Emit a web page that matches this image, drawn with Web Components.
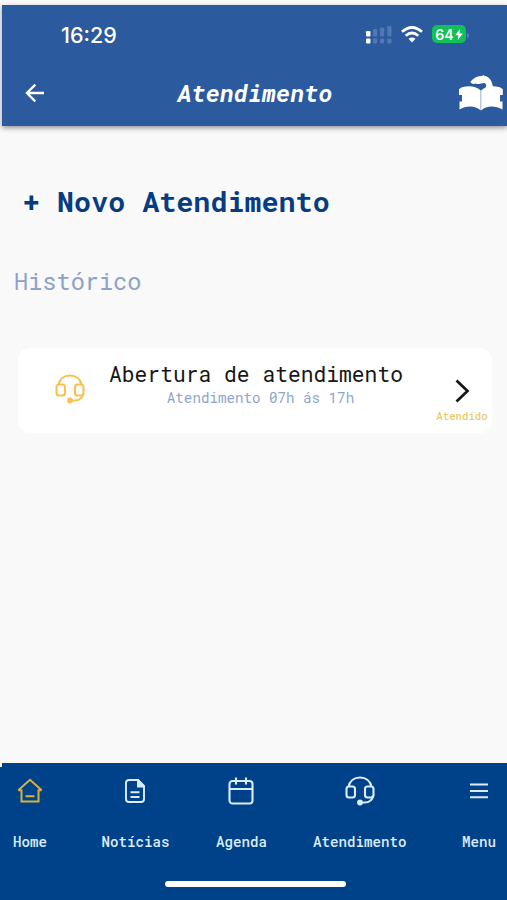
<!DOCTYPE html>
<html lang="pt-BR">
<head>
<meta charset="utf-8">
<meta name="viewport" content="width=device-width, initial-scale=1">
<title>Atendimento</title>
<style>
    body {
        margin: 0;
        background: #f9f9f9;
        font-family: "Roboto Mono", "DejaVu Sans Mono", "Liberation Mono", monospace;
    }
</style>
</head>
<body>
<mobile-app></mobile-app>

<script>
const ICONS = {
    back: /* html */`<svg width="20" height="20" viewBox="0 0 20 20" fill="none" stroke="currentColor" stroke-width="2.3"><path d="M19 10H2.500M10.300 1.600 1.900 10l8.400 8.400"/></svg>`,
    logo: /* html */`<svg width="44" height="36" viewBox="0 0 44 36" fill="currentColor"><path d="M0 14C1 14 1.500 12.500 4 12 10 10.500 17 11 21.700 15.500V35.500C16.500 30.500 7 30.500 .5 34.500V26.500h2.500v-6.500H0zM43.800 14C42.800 14 42.300 12.500 39.800 12 33.800 10.500 27 11 22.100 15.500V35.500C27 30.500 36.500 30.500 43.500 34.500V26.500h-2.500v-6.500h2.800z"/><path d="M11.500 6.500C14 4.500 15 2.500 19 1.500L23.500.8 24.500 0l1.200 1C30 1.500 33 5 34 12.500L26 13.500C28 11 27.500 9 25.500 8 22 8 19 10 16.500 8.500 14.500 9.500 11.500 8.500 11.500 6.500z"/><path d="M21.900 15.500V34" stroke="#b3c5df" stroke-width=".6"/></svg>`,
    headset: /* html */`<svg width="30" height="30" viewBox="0 0 30 30" fill="none" stroke="currentColor" stroke-width="2.100"><path d="M3.500 11C4.500 5 9 1.500 15 1.500S25.500 5 26.500 11M28 19.500C27.500 24 24 26.500 19.500 26.500H16"/><rect x="1.500" y="10.500" width="8.500" height="11" rx="2.500"/><rect x="20" y="10.500" width="8.500" height="11" rx="2.500"/><circle cx="15" cy="26.500" r="2.900" fill="currentColor" stroke="none"/></svg>`,
    next: /* html */`<svg width="16" height="26" viewBox="0 0 16 26" fill="none" stroke="currentColor" stroke-width="2.700"><path d="M2.500 2.500 13.500 13 2.500 23.500"/></svg>`,
    home: /* html */`<svg width="26" height="26" viewBox="0 0 26 26" fill="none" stroke="currentColor" stroke-width="2"><path d="M4.500 11.500v12h17v-12M1.300 12.300H4.500M21.500 12.300h3.200M1.300 12.300 13 1.800 24.700 12.300M8.500 18.300h9"/></svg>`,
    news: /* html */`<svg width="20" height="24" viewBox="0 0 20 24" fill="none" stroke="currentColor" stroke-width="1.900"><path d="M13 1H4Q1 1 1 4V20Q1 23 4 23H16Q19 23 19 20V7zM5.500 13.300h9M5.500 18h9"/><path d="M13 1V7.500H19z" fill="currentColor"/></svg>`,
    calendar: /* html */`<svg width="26" height="28" viewBox="0 0 26 28" fill="none" stroke="currentColor" stroke-width="2.100"><rect x="1.500" y="4" width="23" height="22.500" rx="3"/><path d="M1.500 12h23M8 .5v7M18 .5v7"/></svg>`,
    menu: /* html */`<svg width="18" height="16" viewBox="0 0 18 16" fill="none" stroke="currentColor" stroke-width="1.900"><path d="M0 1.500h18M0 8h18M0 14.300h18"/></svg>`,
    signal: /* html */`<svg width="26" height="18" viewBox="0 0 26 18"><g fill="#5178b3"><rect x="7" y="3" width="4.200" height="7.500" rx="1"/><rect x="14" y="1.500" width="4.200" height="9" rx="1"/><rect x="21.300" y="0" width="4.200" height="10.500" rx="1"/><rect x="7" y="12.500" width="4.200" height="5" rx="1"/><rect x="14" y="12.500" width="4.200" height="5" rx="1"/><rect x="21.300" y="12.500" width="4.200" height="5" rx="1"/></g><g fill="#fff"><rect y="5" width="4.500" height="5.500" rx="1"/><rect y="12.500" width="4.500" height="5" rx="1"/></g></svg>`,
    wifi: /* html */`<svg width="22" height="17" viewBox="0 0 22 17" fill="none" stroke="#fff" stroke-width="2.800"><path d="M1 5.800Q11-2.800 21 5.800M4.700 9.700Q11 4.300 17.300 9.700"/><path d="M11 16.500 7.500 12.800Q11 10 14.500 12.800z" fill="#fff" stroke="none"/></svg>`,
    bolt: /* html */`<svg width="8" height="11" viewBox="0 0 8 11" fill="#fff"><path d="M5 0 .3 6.200H3.300L2.800 11 7.800 4.600H4.600z"/></svg>`
};

class AppIcon extends HTMLElement {
    constructor() {
        super();
        this.attachShadow({mode: "open"});
    }

    connectedCallback() {
        this.shadowRoot.innerHTML = /* html */`
        <style>
            :host { display: block; flex: none; }
            svg { display: block; }
        </style>
        ${ICONS[this.getAttribute("name")]}
        `;
    }
}

class StatusBar extends HTMLElement {
    constructor() {
        super();
        this.attachShadow({mode: "open"});
    }

    static get styles() {
        return /* css */`
            :host {
                display: flex;
                align-items: center;
                height: 60px;
                padding: 0 38px 0 59px;
                font-family: Inter, Roboto, sans-serif;
            }

            .time {
                flex: 1;
                margin-top: -1px;
                font-size: 21.5px;
                font-weight: 500;
            }

            .wifi {
                margin: -2px 9px 0;
            }

            .battery {
                display: flex;
                align-items: center;
                justify-content: center;
                gap: 1px;
                width: 34px;
                height: 18px;
                margin-top: -2px;
                border-radius: 5px;
                background: #12c058;
                font-size: 14px;
                font-weight: 600;
            }

            .cap {
                width: 2px;
                height: 5px;
                margin-left: 1px;
                border-radius: 0 2px 2px 0;
                background: #3c8fa0;
            }
        `;
    }

    connectedCallback() {
        this.shadowRoot.innerHTML = /* html */`
        <style>${StatusBar.styles}</style>
        <span class="time">16:29</span>
        <app-icon name="signal"></app-icon>
        <app-icon class="wifi" name="wifi"></app-icon>
        <div class="battery"><span>64</span><app-icon name="bolt"></app-icon></div>
        <div class="cap"></div>
        `;
    }
}

class AppHeader extends HTMLElement {
    constructor() {
        super();
        this.attachShadow({mode: "open"});
    }

    static get styles() {
        return /* css */`
            :host {
                display: block;
                height: 121px;
                color: #fff;
                background: #2c5a9e;
                box-shadow: 0 2px 5px #0006;
            }

            .bar {
                display: grid;
                grid-template-columns: 1fr auto 1fr;
                align-items: center;
                height: 56px;
                padding: 0 4px 0 23px;
            }

            .logo {
                justify-self: end;
            }

            h1 {
                margin: 0;
                font-size: 24px;
                font-style: italic;
                font-weight: 700;
                transform: translateX(-9px);
            }
        `;
    }

    connectedCallback() {
        this.shadowRoot.innerHTML = /* html */`
        <style>${AppHeader.styles}</style>
        <status-bar></status-bar>
        <div class="bar">
            <app-icon name="back"></app-icon>
            <h1><slot></slot></h1>
            <app-icon class="logo" name="logo"></app-icon>
        </div>
        `;
    }
}

class SupportCard extends HTMLElement {
    constructor() {
        super();
        this.attachShadow({mode: "open"});
    }

    static get styles() {
        return /* css */`
            :host {
                display: grid;
                grid-template-columns: 73px 1fr 56px;
                height: 85px;
                margin: 0 15px 0 16px;
                padding: 0 2px 0 17px;
                box-sizing: border-box;
                border-radius: 12px;
                background: #fff;
                white-space: nowrap;
            }

            .icon {
                align-self: center;
                justify-self: center;
                margin: -4px 3px 0 0;
                color: #f8c150;
            }

            .text {
                display: flex;
                flex-direction: column;
                align-items: center;
                padding: 12px 30px 0 0;
                line-height: 28px;
                font-size: 21.3px;
                color: #161616;
            }

            .hours {
                padding-left: 9px;
                line-height: 19px;
                font-size: 14.2px;
                color: #8ea5cb;
            }

            .state {
                display: flex;
                flex-direction: column;
                align-items: center;
                padding-top: 30px;
                color: #161616;
            }

            .status {
                margin-top: 5px;
                line-height: 14px;
                font-size: 10.7px;
                font-weight: 500;
                color: #eccb68;
            }
        `;
    }

    connectedCallback() {
        this.shadowRoot.innerHTML = /* html */`
        <style>${SupportCard.styles}</style>
        <app-icon class="icon" name="headset"></app-icon>
        <div class="text">
            <slot></slot>
            <span class="hours"><slot name="hours"></slot></span>
        </div>
        <div class="state">
            <app-icon name="next"></app-icon>
            <span class="status"><slot name="status"></slot></span>
        </div>
        `;
    }
}

class NavItem extends HTMLElement {
    constructor() {
        super();
        this.attachShadow({mode: "open"});
    }

    static get styles() {
        return /* css */`
            :host {
                display: flex;
                flex-direction: column;
                align-items: center;
                color: #dcecff;
                font-size: 14.17px;
                font-weight: 500;
                line-height: 20px;
            }

            .icon {
                display: grid;
                place-items: center;
                height: 56px;
                margin-bottom: 13px;
            }

            :host([active]) .icon {
                color: #d5b13f;
            }
        `;
    }

    connectedCallback() {
        this.shadowRoot.innerHTML = /* html */`
        <style>${NavItem.styles}</style>
        <div class="icon"><app-icon name="${this.getAttribute("icon")}"></app-icon></div>
        <slot></slot>
        `;
    }
}

class BottomNav extends HTMLElement {
    constructor() {
        super();
        this.attachShadow({mode: "open"});
    }

    static get styles() {
        return /* css */`
            :host {
                display: flex;
                flex-direction: column;
                height: 137px;
                background: #004289;
                /* the bar bleeds into the left gutter below its top corner */
                box-shadow: -2px 4px 0 #004289;
            }

            nav {
                display: flex;
                padding: 0 11px;
            }

            ::slotted(nav-item:nth-of-type(2)) {
                margin-left: 54.5px;
            }

            ::slotted(nav-item:nth-of-type(3)) {
                margin-left: 46.5px;
            }

            ::slotted(nav-item:nth-of-type(4)) {
                margin-left: 46px;
            }

            ::slotted(nav-item:nth-of-type(5)) {
                margin-left: auto;
            }

            .indicator {
                width: 181px;
                height: 6px;
                margin: 29px auto 0 163px;
                border-radius: 3px;
                background: #fff;
            }
        `;
    }

    connectedCallback() {
        this.shadowRoot.innerHTML = /* html */`
        <style>${BottomNav.styles}</style>
        <nav><slot></slot></nav>
        <div class="indicator"></div>
        `;
    }
}

class MobileApp extends HTMLElement {
    constructor() {
        super();
        this.attachShadow({mode: "open"});
    }

    static get styles() {
        return /* css */`
            :host {
                display: flex;
                flex-direction: column;
                height: 900px;
                box-sizing: border-box;
                padding: 5px 0 0 2px;
                overflow: hidden;
            }

            main {
                flex: 1;
            }

            .new {
                margin: 57px 0 0 21px;
                line-height: 36px;
                font-size: 28.4px;
                font-weight: 700;
                color: #063d82;
            }

            h2 {
                margin: 46px 0 51px 12px;
                line-height: 32px;
                font-size: 23.6px;
                font-weight: 400;
                color: #8ca2cb;
            }
        `;
    }

    connectedCallback() {
        this.shadowRoot.innerHTML = /* html */`
        <style>${MobileApp.styles}</style>
        <app-header>Atendimento</app-header>
        <main>
            <div class="new">+ Novo Atendimento</div>
            <h2>Histórico</h2>
            <support-card>
                Abertura de atendimento
                <span slot="hours">Atendimento 07h ás 17h</span>
                <span slot="status">Atendido</span>
            </support-card>
        </main>
        <bottom-nav>
            <nav-item icon="home" active>Home</nav-item>
            <nav-item icon="news">Notícias</nav-item>
            <nav-item icon="calendar">Agenda</nav-item>
            <nav-item icon="headset">Atendimento</nav-item>
            <nav-item icon="menu">Menu</nav-item>
        </bottom-nav>
        `;
    }
}

customElements.define("app-icon", AppIcon);
customElements.define("status-bar", StatusBar);
customElements.define("app-header", AppHeader);
customElements.define("support-card", SupportCard);
customElements.define("nav-item", NavItem);
customElements.define("bottom-nav", BottomNav);
customElements.define("mobile-app", MobileApp);
</script>
</body>
</html>
